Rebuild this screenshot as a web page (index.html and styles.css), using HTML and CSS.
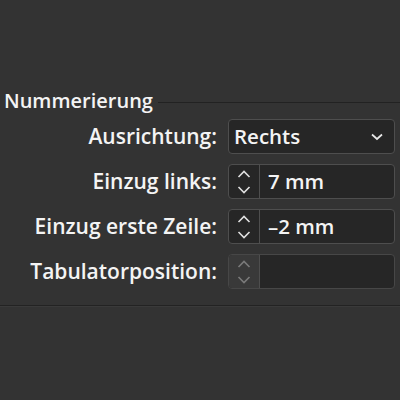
FILE: index.html
```html
<!DOCTYPE html>
<html lang="de">
<head>
<meta charset="utf-8">
<link rel="stylesheet" href="styles.css">
</head>
<body>
<div class="panel">
  <div class="legend"><span class="legend-text">Nummerierung</span><span class="legend-line"></span></div>
  <div class="rows">
    <label class="label">Ausrichtung:</label>
    <div class="box select">
      <span class="value">Rechts</span>
      <svg class="chev" width="12" height="8" viewBox="0 0 12 8"><path d="M1 1.5 L6 6 L11 1.5" fill="none" stroke="#e8e8e8" stroke-width="1.7"/></svg>
    </div>

    <label class="label">Einzug links:</label>
    <div class="box spin">
      <div class="arrows">
        <svg width="16" height="28" viewBox="0 0 16 28"><path d="M2.5 9 L8 3.5 L13.5 9" fill="none" stroke="#e0e0e0" stroke-width="1.6"/><path d="M2.5 19 L8 24.5 L13.5 19" fill="none" stroke="#e0e0e0" stroke-width="1.6"/></svg>
      </div>
      <span class="value field">7 mm</span>
    </div>

    <label class="label">Einzug erste Zeile:</label>
    <div class="box spin">
      <div class="arrows">
        <svg width="16" height="28" viewBox="0 0 16 28"><path d="M2.5 9 L8 3.5 L13.5 9" fill="none" stroke="#e0e0e0" stroke-width="1.6"/><path d="M2.5 19 L8 24.5 L13.5 19" fill="none" stroke="#e0e0e0" stroke-width="1.6"/></svg>
      </div>
      <span class="value field">–2 mm</span>
    </div>

    <label class="label">Tabulatorposition:</label>
    <div class="box spin disabled">
      <div class="arrows">
        <svg width="16" height="28" viewBox="0 0 16 28"><path d="M2.5 9 L8 3.5 L13.5 9" fill="none" stroke="#7a7a7a" stroke-width="1.6"/><path d="M2.5 19 L8 24.5 L13.5 19" fill="none" stroke="#7a7a7a" stroke-width="1.6"/></svg>
      </div>
      <span class="value field"></span>
    </div>
  </div>
  <div class="bottom-line"></div>
</div>
</body>
</html>
```

FILE: styles.css
```css
html, body {
  margin: 0;
  padding: 0;
  background: #333333;
  width: 400px;
  height: 400px;
  overflow: hidden;
}
.panel {
  padding-top: 88px;
  font-family: "Open Sans", "Noto Sans", sans-serif;
  font-weight: 600;
  color: #f4f4f4;
}
.legend {
  display: flex;
  align-items: center;
  padding-left: 4px;
  height: 26px;
}
.legend-text {
  font-size: 20px;
  line-height: 26px;
}
.legend-line {
  flex: 1;
  height: 1px;
  background: #222222;
  margin-left: 5px;
  margin-top: 2px;
}
.rows {
  display: grid;
  grid-template-columns: 217px 167px;
  column-gap: 11px;
  row-gap: 10px;
  margin-top: 5px;
}
.label {
  text-align: right;
  font-size: 21px;
  line-height: 35px;
  height: 35px;
  white-space: nowrap;
}
.box {
  height: 35px;
  box-sizing: border-box;
  border: 1px solid #4e4e4e;
  border-radius: 4px;
  background: #262626;
  display: flex;
  align-items: center;
  font-size: 20.5px;
}
.select {
  justify-content: space-between;
  padding: 0 11px 0 5px;
}
.select .value {
  line-height: 33px;
}
.arrows {
  width: 30px;
  height: 33px;
  display: flex;
  align-items: center;
  justify-content: center;
  border-right: 1px solid #4e4e4e;
}
.field {
  padding-left: 8px;
  line-height: 33px;
}
.disabled .arrows {
  background: #393939;
  border-radius: 3px 0 0 3px;
}
.disabled {
  border-color: #474747;
}
.bottom-line {
  margin-top: 16px;
  height: 1px;
  background: #232323;
  border-bottom: 1px solid #3a3a3a;
}
```
